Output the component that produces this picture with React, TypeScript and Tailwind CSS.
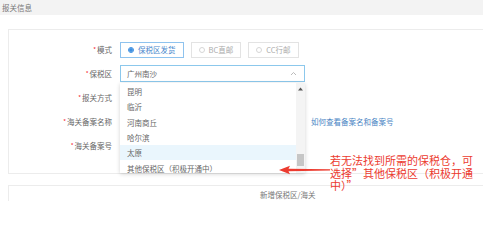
import React from 'react';

const FONT = { fontFamily: '"Noto Sans CJK SC", "Noto Sans", sans-serif' };

const options = ['昆明', '临沂', '河南商丘', '哈尔滨', '太原', '其他保税区（积极开通中）'];

const Label = ({ text }: { text: string }) => (
  <div className="flex h-[17px] items-center justify-end text-[7.5px] text-[#666]">
    <span className="mr-[1px] text-[6px] text-[#f5222d]">*</span>
    {text}
  </div>
);

const Radio = ({ text, active }: { text: string; active?: boolean }) => (
  <div
    className={`flex h-[16px] items-center gap-[4px] border px-[7px] text-[7.5px] ${
      active ? 'border-[#8fc3ee] text-[#4a87cc]' : 'border-[#e3e3e3] text-[#aaa]'
    }`}
  >
    <span
      className={`flex h-[6px] w-[6px] items-center justify-center rounded-full border ${
        active ? 'border-[#3d8ee0]' : 'border-[#d6d6d6]'
      }`}
    >
      {active && <span className="h-[4px] w-[4px] rounded-full bg-[#3d8ee0]" />}
    </span>
    {text}
  </div>
);

export default function App() {
  return (
    <div className="relative h-[201px] w-[483px] overflow-hidden bg-white" style={FONT}>
      {/* Header strip */}
      <div className="flex h-[15px] items-center bg-[#f3f3f3] pl-[2px] text-[7.5px] text-[#777]">报关信息</div>

      {/* Form card */}
      <div className="ml-[8px] mt-[14px] border border-r-0 border-[#ececec] pb-[19px] pt-[11px]">
        <div className="grid grid-cols-[103px_1fr] gap-x-[8px] gap-y-[7px]">
          <Label text="模式" />
          <div className="flex items-center gap-[7px]">
            <Radio text="保税区发货" active />
            <Radio text="BC直邮" />
            <Radio text="CC行邮" />
          </div>

          <Label text="保税区" />
          <div className="relative w-[185px]">
            <div className="flex h-[17px] items-center justify-between border border-[#8cc8ec] px-[6px] text-[7.5px] text-[#666]">
              <span>广州南沙</span>
              <svg width="7" height="5" viewBox="0 0 7 5" className="mr-[1px]">
                <path d="M1 4 L3.5 1.5 L6 4" fill="none" stroke="#aaa" strokeWidth="0.8" />
              </svg>
            </div>
          </div>

          <Label text="报关方式" />
          <div className="h-[17px]" />

          <Label text="海关备案名称" />
          <div className="flex h-[17px] items-center">
            <div className="h-[17px] w-[185px]" />
            <span className="ml-[6px] text-[7.5px] text-[#4a85c4]">如何查看备案名和备案号</span>
          </div>

          <Label text="海关备案号" />
          <div className="h-[17px]" />
        </div>
      </div>

      {/* Lower card */}
      <div className="ml-[8px] mt-[11px] h-[30px] border border-r-0 border-[#ececec] pl-[251px] pt-[3px] text-[7.5px] text-[#777]">
        新增保税区/海关
      </div>

      {/* Dropdown menu */}
      <div className="absolute left-[120px] top-[83px] flex h-[90px] w-[185px] overflow-hidden bg-white shadow-[0_1px_4px_rgba(0,0,0,0.18)]">
        <div className="flex-1 pt-[1px]">
          {options.map((o) => (
            <div
              key={o}
              className={`flex h-[15.3px] items-center pl-[7px] text-[7.5px] text-[#666] ${
                o === '太原' ? 'bg-[#eaf6fd]' : ''
              }`}
            >
              {o}
            </div>
          ))}
        </div>
        <div className="flex w-[9px] flex-col items-center bg-[#f4f4f4]">
          <svg width="5" height="4" viewBox="0 0 5 4" className="mt-[4px]">
            <path d="M0 3.5 L2.5 0.5 L5 3.5 Z" fill="#555" />
          </svg>
          <div className="mt-[63px] h-[12px] w-[7px] bg-[#c6c6c6]" />
        </div>
      </div>

      {/* Annotation arrow */}
      <svg className="absolute left-[279px] top-[165px]" width="52" height="10" viewBox="0 0 52 10">
        <path d="M0 5 L11 0.8 L9.5 3.7 L51 4.3 L51 5.4 L9.5 6.3 L11 9.2 Z" fill="#ec3b2f" />
      </svg>

      {/* Annotation text */}
      <div className="absolute left-[330px] top-[154px] w-[150px] text-[11px] leading-[12.5px] text-[#ec3b2f]">
        若无法找到所需的保税仓，可选择”其他保税区（积极开通中）”
      </div>
    </div>
  );
}
